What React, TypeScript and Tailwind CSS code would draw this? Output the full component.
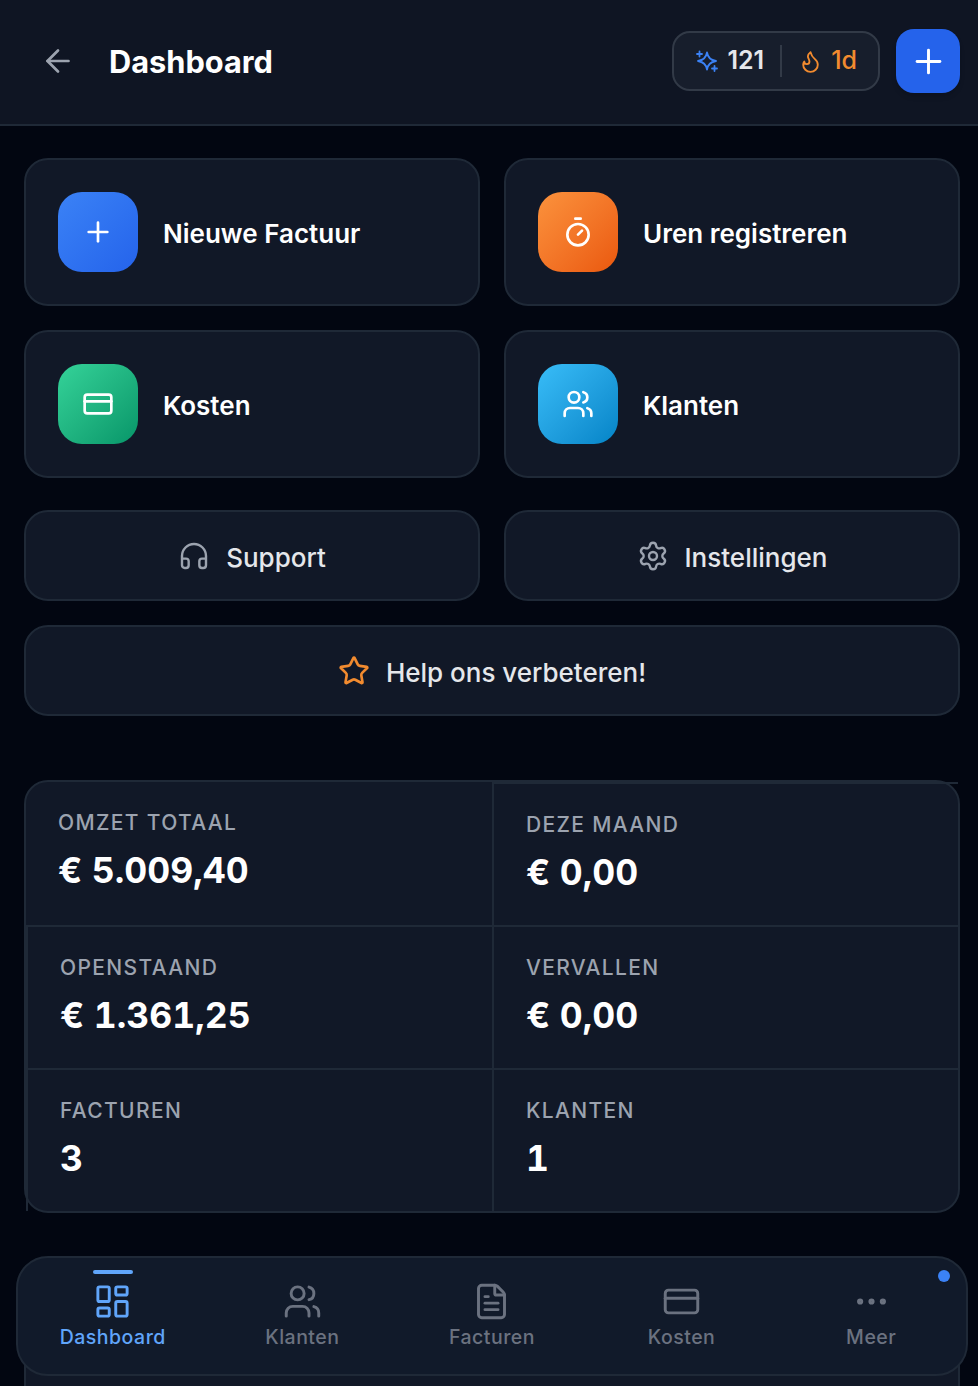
import React from "react";
import { ArrowLeft, Plus, Flame, Timer, CreditCard, Users, Headphones, Settings, Star, LayoutDashboard, FileText, Ellipsis } from "lucide-react";

function Sparkle() {
  return (
    <svg width="24" height="24" viewBox="0 0 24 24" fill="none" stroke="#3b82f6" strokeWidth="1.8" strokeLinecap="round" strokeLinejoin="round">
      <path d="M12 3.5Q13.2 10.8 21 12Q13.2 13.2 12 20.5Q10.8 13.2 3 12Q10.8 10.8 12 3.5z" />
      <path d="M4.5 2.5v5M2 5h5" />
      <path d="M19.5 17v5M17 19.5h5" />
    </svg>
  );
}

function ActionCard({ tile, icon, label }: { tile: string; icon: React.ReactNode; label: string }) {
  return (
    <div className="flex h-[148px] items-center gap-[25px] rounded-3xl border-2 border-[#1f2937] bg-[#111827] px-8">
      <div className={`flex h-20 w-20 items-center justify-center rounded-3xl text-white ${tile}`}>{icon}</div>
      <span className="pt-[3px] text-[26px] font-semibold text-white">{label}</span>
    </div>
  );
}

function SmallCard({ icon, label }: { icon: React.ReactNode; label: string }) {
  return (
    <div className="flex h-[91px] items-center justify-center gap-4 rounded-3xl border-2 border-[#1f2937] bg-[#111827] text-[26px] font-medium text-[#e5e7eb]">
      {icon}
      <span className="pt-[3px]">{label}</span>
    </div>
  );
}

function Stat({ label, value, cls }: { label: string; value: string; cls: string }) {
  return (
    <div className={`h-[143px] border-[#1f2937] pl-8 pt-[26px] ${cls}`}>
      <div className="text-[21px] font-medium uppercase leading-[30px] tracking-[1.35px] text-[#9ca3af]">{label}</div>
      <div className="mt-[9px] text-[35.5px] font-bold tabular-nums leading-[48px] text-white">{value}</div>
    </div>
  );
}

function NavItem({ icon, label, active }: { icon: React.ReactNode; label: string; active?: boolean }) {
  return (
    <div className={`relative flex flex-col items-center pt-[24px] ${active ? "text-[#60a5fa]" : "text-[#6b7280]"}`}>
      {active && <div className="absolute left-1/2 top-[12px] h-[4px] w-10 -translate-x-1/2 rounded-full bg-[#60a5fa]" />}
      {icon}
      <span className="mt-[4px] text-[19.5px] font-medium leading-[24px] tracking-[0.025em]">{label}</span>
    </div>
  );
}

export default function App() {
  const nav = 1.8;
  const tile = 32;
  return (
    <div className="relative h-[1386px] w-[978px] overflow-hidden bg-[#020611] font-['Inter',sans-serif]">
      <header className="flex h-[126px] items-center border-b-2 border-[#1f2937] bg-[#0f1523] pb-[2px] pl-[40px] pr-[18px]">
        <ArrowLeft size={36} strokeWidth={1.8} className="text-[#9ca3af]" />
        <h1 className="ml-[33px] mt-[2px] text-[30.75px] font-bold text-white">Dashboard</h1>
        <div className="ml-auto flex h-[60px] items-center rounded-[18px] border-2 border-[#323a47] bg-[#171e2c] pl-[21px] pr-[21px]">
          <Sparkle />
          <span className="ml-[8px] text-[25px] font-semibold text-[#e5e7eb]">121</span>
          <div className="ml-[16px] h-[32px] w-[2px] bg-[#323a47]" />
          <Flame size={25} strokeWidth={1.8} className="ml-[16px] text-[#f28b2f]" />
          <span className="ml-[8px] text-[25px] font-medium text-[#f28b2f]">1d</span>
        </div>
        <div className="ml-[16px] flex h-16 w-16 items-center justify-center rounded-[18px] bg-[#2563eb] text-white shadow-md">
          <Plus size={39} strokeWidth={1.8} />
        </div>
      </header>

      <main className="pl-6 pr-[18px] pt-8">
        <div className="grid grid-cols-2 gap-6">
          <ActionCard tile="bg-gradient-to-br from-[#3b82f6] to-[#2563eb]" icon={<Plus size={tile} strokeWidth={2} />} label="Nieuwe Factuur" />
          <ActionCard tile="bg-gradient-to-br from-[#fb923c] to-[#ea580c]" icon={<Timer size={tile} strokeWidth={2} />} label="Uren registreren" />
          <ActionCard tile="bg-gradient-to-br from-[#34d399] to-[#059669]" icon={<CreditCard size={tile} strokeWidth={2} />} label="Kosten" />
          <ActionCard tile="bg-gradient-to-br from-[#38bdf8] to-[#0284c7]" icon={<Users size={tile} strokeWidth={2} />} label="Klanten" />
        </div>
        <div className="mt-8 grid grid-cols-2 gap-6">
          <SmallCard icon={<Headphones size={32} strokeWidth={1.8} className="text-[#9ca3af]" />} label="Support" />
          <SmallCard icon={<Settings size={32} strokeWidth={1.8} className="text-[#9ca3af]" />} label="Instellingen" />
        </div>
        <div className="mt-6">
          <SmallCard icon={<Star size={32} strokeWidth={2} className="text-[#f28b2f]" />} label="Help ons verbeteren!" />
        </div>

        <section className="mt-16 grid grid-cols-2 rounded-3xl border-2 border-[#1f2937] bg-[#111827]">
          <Stat label="Omzet totaal" value="€ 5.009,40" cls="" />
          <Stat label="Deze maand" value="€ 0,00" cls="border-l-2 border-t-2" />
          <Stat label="Openstaand" value="€ 1.361,25" cls="border-l-2 border-t-2" />
          <Stat label="Vervallen" value="€ 0,00" cls="border-l-2 border-t-2" />
          <Stat label="Facturen" value="3" cls="border-l-2 border-t-2" />
          <Stat label="Klanten" value="1" cls="border-l-2 border-t-2" />
        </section>

        <div className="mt-[50px] h-[200px] rounded-3xl border-2 border-[#1f2937] bg-[#111827]" />
      </main>

      <nav className="absolute left-4 top-[1256px] grid h-[120px] w-[952px] grid-cols-5 rounded-[32px] border-2 border-[#1f2937] bg-[#111a2a]">
        <NavItem active icon={<LayoutDashboard size={39} strokeWidth={nav} />} label="Dashboard" />
        <NavItem icon={<Users size={39} strokeWidth={nav} />} label="Klanten" />
        <NavItem icon={<FileText size={39} strokeWidth={nav} />} label="Facturen" />
        <NavItem icon={<CreditCard size={39} strokeWidth={nav} />} label="Kosten" />
        <NavItem icon={<Ellipsis size={39} strokeWidth={nav} />} label="Meer" />
        <div className="absolute right-[16px] top-[12px] h-3 w-3 rounded-full bg-[#3b82f6]" />
      </nav>
    </div>
  );
}
